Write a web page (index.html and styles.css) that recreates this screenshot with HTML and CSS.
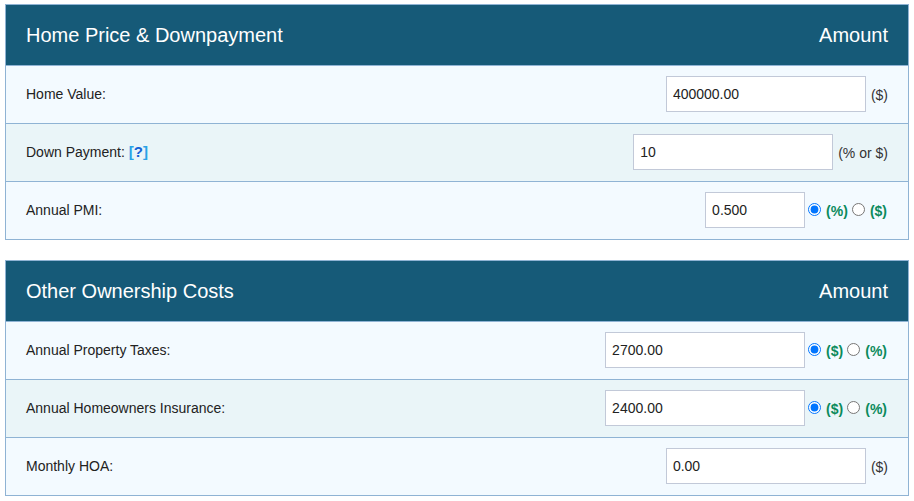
FILE: index.html
```html
<!DOCTYPE html>
<html>
<head>
<meta charset="utf-8">
<link rel="stylesheet" href="styles.css">
</head>
<body>
<div class="page">
  <div class="panel">
    <div class="head"><span>Home Price &amp; Downpayment</span><span>Amount</span></div>
    <div class="row odd">
      <span class="label">Home Value:</span>
      <span class="ctl"><input class="inp w200" type="text" value="400000.00"><span class="unit">($)</span></span>
    </div>
    <div class="row even">
      <span class="label">Down Payment: <span class="help"><span class="br">[</span><span class="q">?</span><span class="br">]</span></span></span>
      <span class="ctl"><input class="inp w200" type="text" value="10"><span class="unit">(% or $)</span></span>
    </div>
    <div class="row odd">
      <span class="label">Annual PMI:</span>
      <span class="ctl"><input class="inp w100" type="text" value="0.500"><input class="rad" type="radio" name="pmi" checked><span class="opt">(%)</span><input class="rad" type="radio" name="pmi"><span class="opt">($)</span></span>
    </div>
  </div>

  <div class="panel">
    <div class="head"><span>Other Ownership Costs</span><span>Amount</span></div>
    <div class="row odd">
      <span class="label">Annual Property Taxes:</span>
      <span class="ctl"><input class="inp w200" type="text" value="2700.00"><input class="rad" type="radio" name="tax" checked><span class="opt">($)</span><input class="rad" type="radio" name="tax"><span class="opt">(%)</span></span>
    </div>
    <div class="row even">
      <span class="label">Annual Homeowners Insurance:</span>
      <span class="ctl"><input class="inp w200" type="text" value="2400.00"><input class="rad" type="radio" name="ins" checked><span class="opt">($)</span><input class="rad" type="radio" name="ins"><span class="opt">(%)</span></span>
    </div>
    <div class="row odd">
      <span class="label">Monthly HOA:</span>
      <span class="ctl"><input class="inp w200" type="text" value="0.00"><span class="unit">($)</span></span>
    </div>
  </div>
</div>
</body>
</html>
```

FILE: styles.css
```css
html, body {
  margin: 0;
  padding: 0;
  background: #ffffff;
}
body {
  font-family: "Liberation Sans", Arial, sans-serif;
  font-size: 14px;
  color: #222222;
}
.page {
  padding: 4px 5px 0 5px;
}
.panel {
  border: 1px solid #8fb3d4;
  margin-bottom: 20px;
}
.head {
  height: 60px;
  background: #165a78;
  color: #ffffff;
  font-size: 20px;
  display: flex;
  align-items: center;
  justify-content: space-between;
  padding: 0 20px;
}
.row {
  height: 57px;
  border-top: 1px solid #8fb3d4;
  display: flex;
  align-items: center;
  justify-content: space-between;
  padding: 0 20px;
}
.odd { background: #f3faff; }
.even { background: #eaf5f8; }
.label {
  color: #222222;
  position: relative;
  top: -1px;
}
.ctl {
  display: flex;
  align-items: center;
}
.inp {
  box-sizing: border-box;
  height: 36px;
  border: 1px solid #c2c9d8;
  background: #ffffff;
  font-family: "Liberation Sans", Arial, sans-serif;
  font-size: 14px;
  color: #222222;
  padding: 0 6px;
  margin: 0 0 1px 0;
  outline: none;
}
.w200 { width: 200px; }
.w100 { width: 100px; }
.unit {
  margin-left: 5px;
  color: #333333;
}
.rad {
  margin: 0 5px 3px 3px;
  width: 13px;
  height: 13px;
}
.opt {
  color: #0b8a5c;
  font-weight: bold;
  margin-right: 1px;
}
.help {
  font-weight: bold;
  font-size: 15px;
}
.help .br { color: #29a3e6; }
.help .q { color: #1462d6; }
```
